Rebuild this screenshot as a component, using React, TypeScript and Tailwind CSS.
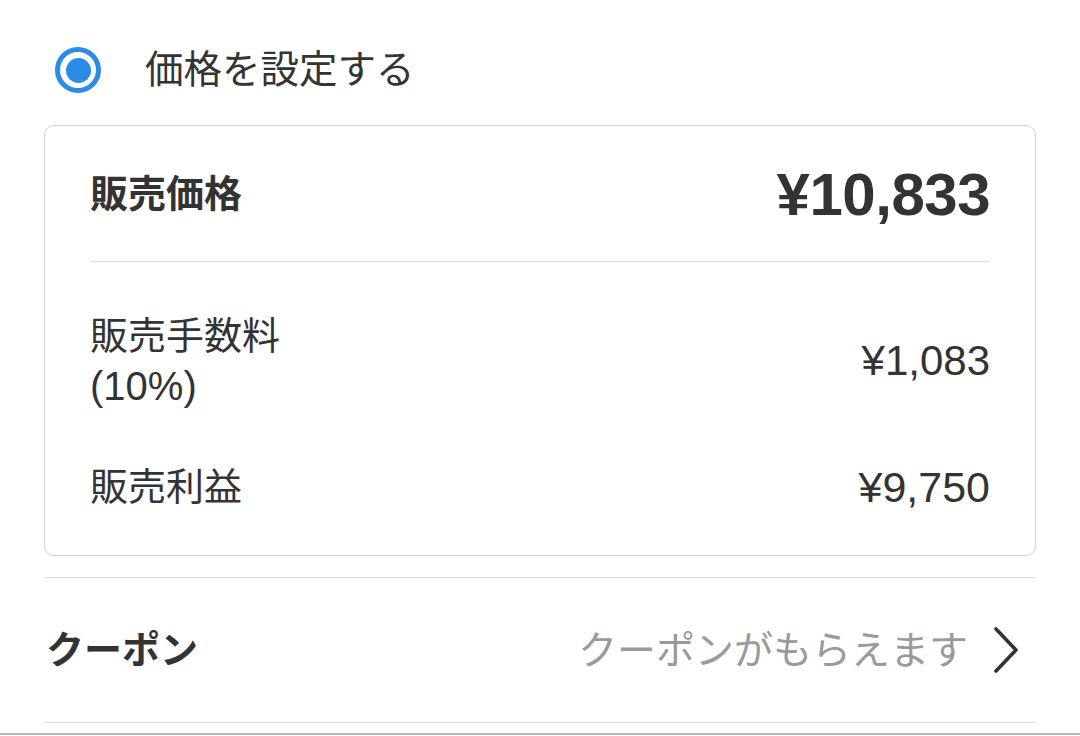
const font = { fontFamily: '"Liberation Sans", "Noto Sans CJK JP", sans-serif' };

function Chevron() {
  return (
    <svg width="28" height="48" viewBox="0 0 28 48" fill="none">
      <path d="M4 3 L24 24 L4 45" stroke="#333" strokeWidth="3.6" strokeLinecap="round" strokeLinejoin="round" />
    </svg>
  );
}

export default function App() {
  return (
    <div className="w-[1080px] h-[736px] bg-white overflow-hidden text-[#333]" style={font}>
      <div className="pt-[40px] pl-[55px] flex items-center h-[100px]">
        <div className="w-[46px] h-[46px] rounded-full border-[5px] border-[#2b8be6] flex items-center justify-center">
          <div className="w-[25px] h-[25px] rounded-full bg-[#2b8be6]" />
        </div>
        <span className="ml-[44px] text-[38.5px] leading-none">価格を設定する</span>
      </div>

      <div className="mx-[44px] mt-[25px] w-[992px] rounded-[10px] border border-[#d6d6d6] px-[45px] pb-[43px]">
        <div className="h-[135px] flex items-center justify-between">
          <span className="text-[38px] font-bold leading-none">販売価格</span>
          <span className="text-[60px] font-bold leading-none tracking-[-0.5px] pt-[2px]">¥10,833</span>
        </div>
        <div className="h-px bg-[#dcdcdc]" />
        <div className="pt-[49px] flex items-center justify-between">
          <div className="text-[38px] leading-[50px]">
            <div>販売手数料</div>
            <div className="text-[40px]">(10%)</div>
          </div>
          <span className="text-[42px] leading-none">¥1,083</span>
        </div>
        <div className="mt-[51px] h-[50px] flex items-center justify-between">
          <span className="text-[38px] leading-none">販売利益</span>
          <span className="text-[43px] leading-none">¥9,750</span>
        </div>
      </div>

      <div className="mx-[44px] mt-[21px] w-[992px] h-px bg-[#dcdcdc]" />
      <div className="mx-[44px] w-[992px] h-[144px] flex items-center justify-between pl-[2px] pr-[16px]">
        <span className="text-[38px] font-bold leading-none">クーポン</span>
        <div className="flex items-center gap-[24px]">
          <span className="text-[39px] leading-none text-[#9a9a9a]">クーポンがもらえます</span>
          <Chevron />
        </div>
      </div>
      <div className="mx-[44px] w-[992px] h-px bg-[#dcdcdc]" />
      <div className="mt-[10px] h-[2px] bg-[#b9b9b9]" />
    </div>
  );
}
